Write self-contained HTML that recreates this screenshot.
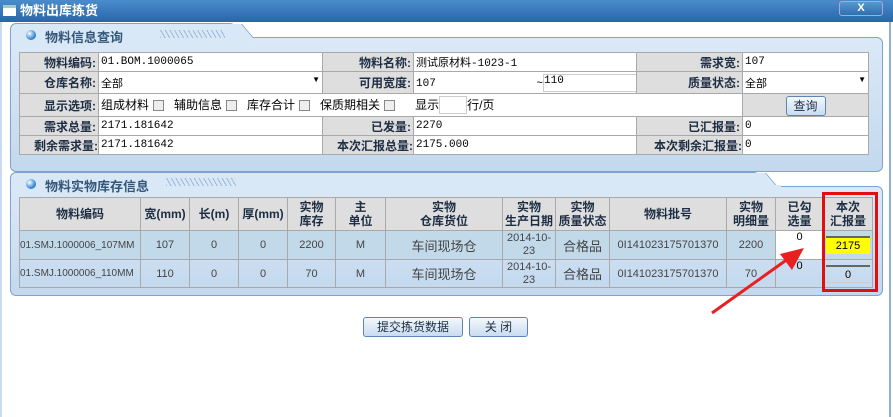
<!DOCTYPE html>
<html><head><meta charset="utf-8"><style>
*{margin:0;padding:0;box-sizing:border-box}
body{width:893px;height:417px;overflow:hidden;background:#fff;font-family:"Liberation Sans","Noto Sans CJK SC",sans-serif;font-size:12px;position:relative;color:#000}
.abs{position:absolute}
.title{left:0;top:0;width:893px;height:22px;background:linear-gradient(#4a8ccb,#2866aa);color:#fff;font-weight:bold;font-size:13px;line-height:22px;padding-left:20px}
.frame{left:0;top:22px;width:891px;height:395px;border-left:2px solid #c9dbee;border-right:2px solid #8fb0d4}
.panel{border:1px solid #7ea4cb;border-radius:6px;background:linear-gradient(#dbe9f7,#c3d8ee)}
.tab{font-weight:bold;color:#34577a;font-size:13px}
table{border-collapse:collapse;position:absolute;table-layout:fixed}
td{border:1px solid #a9a9a9;overflow:hidden;white-space:nowrap;padding:0 2px}
.t1 td{background:#fff;font-family:"Liberation Mono","Noto Sans CJK SC",monospace;font-size:11px}
.t1 td.l{background:#dedede;text-align:right;font-weight:bold;font-family:"Liberation Sans","Noto Sans CJK SC",sans-serif;font-size:12px;color:#1d2e44}
.t2 td{text-align:center;font-size:11px;color:#444}
.t2 tr.h td{background:#dedede;font-weight:bold;font-size:12px;color:#1d2e44;line-height:14px}
.t2 tr.r1 td{background:#c2d9ea}
.btn{border:1px solid #5b86b4;border-radius:3px;background:linear-gradient(#f4f8fc,#c9dcf0);text-align:center;font-size:12px;line-height:18px}
.dot{width:10px;height:10px;border-radius:50%;background:radial-gradient(circle at 35% 35%,#fff,#3b8ad9 60%,#1b5a9c)}
.cb{display:inline-block;width:11px;height:11px;border:1px solid #888;background:#eee;vertical-align:middle;margin:0 10px 0 4px}
</style></head><body>
<div class="abs title">物料出库拣货</div>
<div class="abs" style="left:3px;top:5px;width:13px;height:11px;background:#fff;border-top:3px solid #9cc"></div>
<div class="abs" style="left:839px;top:1px;width:44px;height:15px;border:1px solid #aac;border-radius:3px;background:linear-gradient(#5a96d2,#2f6fb0);color:#fff;text-align:center;font-size:11px;line-height:13px;font-weight:bold">X</div>
<div class="abs frame"></div>

<div class="abs panel" style="left:10px;top:37px;width:873px;height:135px"></div>
<div class="abs" style="left:10px;top:23px;width:226px;height:20px;background:#d9e8f6;border:1px solid #7ea4cb;border-bottom:none;border-radius:6px 6px 0 0"></div>
<div class="abs" style="left:222px;top:24px;width:26px;height:14px;background:#d9e8f6;transform:skewX(40deg);border-right:1px solid #7ea4cb"></div>
<div class="abs" style="left:11px;top:36px;width:240px;height:8px;background:#d9e8f6"></div>
<div class="abs dot" style="left:26px;top:30px"></div>
<div class="abs tab" style="left:45px;top:27px">物料信息查询</div>
<div class="abs" style="left:160px;top:30px;width:65px;height:8px;background:repeating-linear-gradient(60deg,#9bb8d6 0 1px,transparent 1px 4px)"></div>
<table class="t1" style="left:19px;top:52px;width:849px">
<colgroup><col style="width:79px"><col style="width:224px"><col style="width:91px"><col style="width:223px"><col style="width:106px"><col style="width:126px"></colgroup>
<tr style="height:19px"><td class="l">物料编码:</td><td>01.BOM.1000065</td><td class="l">物料名称:</td><td>测试原材料-1023-1</td><td class="l">需求宽:</td><td>107</td></tr>
<tr style="height:22px"><td class="l">仓库名称:</td><td style="font-family:'Liberation Sans','Noto Sans CJK SC'">全部<span style="float:right;font-size:8px">▼</span></td><td class="l">可用宽度:</td><td>107 <span style="display:inline-block;width:94px"></span>~<span style="display:inline-block;border:1px solid #ccc;width:98px;height:18px;vertical-align:middle">110</span></td><td class="l">质量状态:</td><td style="font-family:'Liberation Sans','Noto Sans CJK SC'">全部<span style="float:right;font-size:8px">▼</span></td></tr>
<tr style="height:23px"><td class="l">显示选项:</td><td colspan="4" style="font-family:'Liberation Sans','Noto Sans CJK SC';font-size:12px">组成材料<span class="cb"></span>辅助信息<span class="cb"></span>库存合计<span class="cb"></span>保质期相关<span class="cb"></span> &nbsp; 显示<span style="display:inline-block;border:1px solid #ccc;width:28px;height:18px;vertical-align:middle"></span>行/页</td><td class="l" style="text-align:center;padding-top:1px"><span class="btn" style="display:inline-block;width:40px;color:#1d2e44;font-weight:normal">查询</span></td></tr>
<tr style="height:19px"><td class="l">需求总量:</td><td>2171.181642</td><td class="l">已发量:</td><td>2270</td><td class="l">已汇报量:</td><td>0</td></tr>
<tr style="height:19px"><td class="l" style="padding:0">剩余需求量:</td><td>2171.181642</td><td class="l" style="padding:0">本次汇报总量:</td><td>2175.000</td><td class="l" style="padding:0">本次剩余汇报量:</td><td>0</td></tr>
</table>

<div class="abs panel" style="left:10px;top:186px;width:873px;height:110px"></div>
<div class="abs" style="left:10px;top:172px;width:750px;height:20px;background:#d9e8f6;border:1px solid #7ea4cb;border-bottom:none;border-radius:6px 6px 0 0"></div>
<div class="abs" style="left:746px;top:173px;width:26px;height:14px;background:#d9e8f6;transform:skewX(40deg);border-right:1px solid #7ea4cb"></div>
<div class="abs" style="left:11px;top:185px;width:770px;height:8px;background:#d9e8f6"></div>
<div class="abs dot" style="left:26px;top:179px"></div>
<div class="abs tab" style="left:45px;top:176px">物料实物库存信息</div>
<div class="abs" style="left:166px;top:178px;width:70px;height:8px;background:repeating-linear-gradient(60deg,#9bb8d6 0 1px,transparent 1px 4px)"></div>
<table class="t2" style="left:19px;top:197px;width:853px">
<colgroup><col style="width:121px"><col style="width:49px"><col style="width:49px"><col style="width:49px"><col style="width:48px"><col style="width:50px"><col style="width:117px"><col style="width:53px"><col style="width:54px"><col style="width:117px"><col style="width:49px"><col style="width:48px"><col style="width:49px"></colgroup>
<tr class="h" style="height:33px"><td>物料编码</td><td>宽(mm)</td><td>长(m)</td><td>厚(mm)</td><td>实物<br>库存</td><td>主<br>单位</td><td>实物<br>仓库货位</td><td style="padding:0">实物<br>生产日期</td><td style="padding:0">实物<br>质量状态</td><td>物料批号</td><td>实物<br>明细量</td><td>已勾<br>选量</td><td>本次<br>汇报量</td></tr>
<tr class="r1" style="height:29px"><td style="text-align:left;padding:0;font-size:10px">01.SMJ.1000006_107MM</td><td>107</td><td>0</td><td>0</td><td>2200</td><td>M</td><td style="font-size:13px">车间现场仓</td><td style="line-height:13px">2014-10-<br>23</td><td style="font-size:13px">合格品</td><td>0I141023175701370</td><td>2200</td><td style="background:#fff;color:#000;vertical-align:top">0</td><td style="padding:3px 2px"><div style="background:#ff0;border-top:2px solid #666;height:18px;line-height:16px;color:#000">2175</div></td></tr>
<tr style="height:28px"><td style="text-align:left;padding:0;font-size:10px">01.SMJ.1000006_110MM</td><td>110</td><td>0</td><td>0</td><td>70</td><td>M</td><td style="font-size:13px">车间现场仓</td><td style="line-height:13px">2014-10-<br>23</td><td style="font-size:13px">合格品</td><td>0I141023175701370</td><td>70</td><td style="color:#000;vertical-align:top">0</td><td style="padding:3px 2px"><div style="border-top:2px solid #666;border-bottom:1px solid #ccc;height:18px;line-height:16px;color:#000">0</div></td></tr>
</table>
<div class="abs" style="left:822px;top:192px;width:56px;height:100px;border:3px solid #e01010"></div>
<svg class="abs" style="left:700px;top:240px" width="110" height="80"><line x1="12" y1="73" x2="92" y2="16" stroke="#e82020" stroke-width="3"/><polygon points="104,8 80,14 92,30" fill="#e82020"/></svg>

<div class="abs btn" style="left:363px;top:317px;width:100px;height:20px;color:#1d2e44">提交拣货数据</div>
<div class="abs btn" style="left:469px;top:317px;width:59px;height:20px;color:#1d2e44">关 闭</div>
</body></html>
